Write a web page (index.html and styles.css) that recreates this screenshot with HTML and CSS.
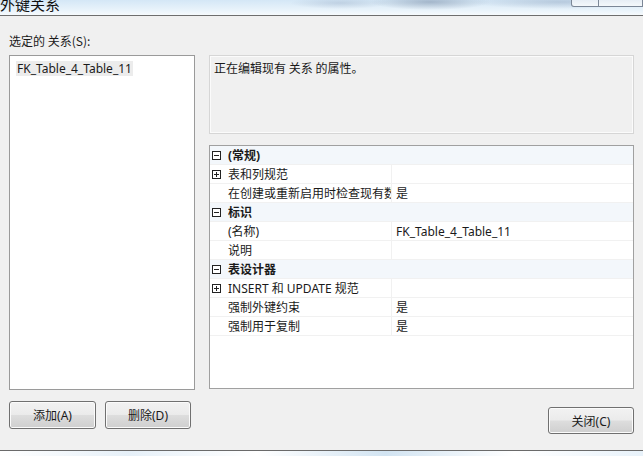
FILE: index.html
```html
<!DOCTYPE html>
<html lang="zh-CN">
  <head>
    <meta charset="UTF-8" />
    <title>外键关系</title>
    <link rel="stylesheet" href="styles.css">
  </head>
  <body>
    <div class="titlebar">
      <span class="title">外键关系</span>
      <div class="caption-buttons">
        <span class="cap cap-help"></span>
        <span class="cap cap-close"></span>
      </div>
    </div>

    <div class="dialog">
      <div class="label">选定的 关系(S):</div>

      <div class="main">
        <div class="listbox">
          <div class="item selected">FK_Table_4_Table_11</div>
        </div>

        <div class="right">
          <div class="desc">正在编辑现有 关系 的属性。</div>

          <div class="grid">
            <div class="row category">
              <span class="gutter"><svg width="9" height="9" viewBox="0 0 9 9"><rect x="0.5" y="0.5" width="8" height="8" fill="#fff" stroke="#222"/><path d="M2 4.5h5" stroke="#222"/></svg></span>
              <span class="name">(常规)</span>
            </div>
            <div class="row">
              <span class="gutter"><svg width="9" height="9" viewBox="0 0 9 9"><rect x="0.5" y="0.5" width="8" height="8" fill="#fff" stroke="#222"/><path d="M2 4.5h5M4.5 2v5" stroke="#222"/></svg></span>
              <span class="name">表和列规范</span>
              <span class="value"></span>
            </div>
            <div class="row">
              <span class="gutter"></span>
              <span class="name">在创建或重新启用时检查现有数据</span>
              <span class="value">是</span>
            </div>
            <div class="row category">
              <span class="gutter"><svg width="9" height="9" viewBox="0 0 9 9"><rect x="0.5" y="0.5" width="8" height="8" fill="#fff" stroke="#222"/><path d="M2 4.5h5" stroke="#222"/></svg></span>
              <span class="name">标识</span>
            </div>
            <div class="row">
              <span class="gutter"></span>
              <span class="name">(名称)</span>
              <span class="value">FK_Table_4_Table_11</span>
            </div>
            <div class="row">
              <span class="gutter"></span>
              <span class="name">说明</span>
              <span class="value"></span>
            </div>
            <div class="row category">
              <span class="gutter"><svg width="9" height="9" viewBox="0 0 9 9"><rect x="0.5" y="0.5" width="8" height="8" fill="#fff" stroke="#222"/><path d="M2 4.5h5" stroke="#222"/></svg></span>
              <span class="name">表设计器</span>
            </div>
            <div class="row">
              <span class="gutter"><svg width="9" height="9" viewBox="0 0 9 9"><rect x="0.5" y="0.5" width="8" height="8" fill="#fff" stroke="#222"/><path d="M2 4.5h5M4.5 2v5" stroke="#222"/></svg></span>
              <span class="name">INSERT 和 UPDATE 规范</span>
              <span class="value"></span>
            </div>
            <div class="row">
              <span class="gutter"></span>
              <span class="name">强制外键约束</span>
              <span class="value">是</span>
            </div>
            <div class="row">
              <span class="gutter"></span>
              <span class="name">强制用于复制</span>
              <span class="value">是</span>
            </div>
          </div>
        </div>
      </div>

      <div class="buttons">
        <button class="btn">添加(A)</button>
        <button class="btn">删除(D)</button>
        <span class="spacer"></span>
        <button class="btn btn-close">关闭(C)</button>
      </div>
    </div>

    <div class="desktop"></div>
  </body>
</html>
```

FILE: styles.css
```css
* {
  margin: 0;
  padding: 0;
  box-sizing: border-box;
}

body {
  width: 643px;
  height: 456px;
  overflow: hidden;
  background: #f0f0f0;
  font-family: "Noto Sans", "Noto Sans CJK SC", sans-serif;
  font-size: 12px;
  color: #1a1a1a;
}

/* window caption, mostly scrolled off the top */
.titlebar {
  height: 16px;
  display: flex;
  justify-content: space-between;
  border-bottom: 1px solid #6e6e6e;
  overflow: hidden;
  background:
    radial-gradient(ellipse 60px 8px at 430px 2px, rgba(120, 140, 165, 0.55), transparent),
    radial-gradient(ellipse 90px 7px at 560px 2px, rgba(150, 170, 195, 0.5), transparent),
    radial-gradient(ellipse 50px 6px at 340px 3px, rgba(150, 170, 195, 0.4), transparent),
    linear-gradient(to bottom, #d4e7f6, #eaf4fb 70%, #f6fafd);
}

.title {
  font-family: "Noto Sans CJK SC", sans-serif;
  font-size: 15px;
  line-height: 15px;
  margin-top: -4px;
  color: #111;
}

.caption-buttons {
  display: flex;
  height: 8px;
  margin-top: -1px;
}

.cap {
  display: block;
  height: 8px;
  border: 1px solid #7b8797;
  border-top: none;
  background: linear-gradient(to bottom, #e4ecf4, #f4f8fb);
}

.cap-help {
  width: 28px;
  border-radius: 0 0 0 3px;
}

.cap-close {
  width: 44px;
  border-left: none;
}

.dialog {
  height: 435px;
  padding: 0 9px;
  border-bottom: 1px solid #6a6a6a;
  display: flex;
  flex-direction: column;
}

.label {
  margin-top: 17px;
  line-height: 16px;
  font-family: "Noto Sans CJK SC", sans-serif;
}

.main {
  margin-top: 6px;
  height: 335px;
  display: flex;
  gap: 14px;
}

.listbox {
  width: 186px;
  height: 335px;
  border: 1px solid #9a9a9a;
  background: #ffffff;
  padding: 4px 0 0 6px;
}

.item {
  display: inline-block;
  line-height: 15px;
  padding: 0 1px;
}

.item.selected {
  background: #ececec;
}

.right {
  flex: 1;
  display: flex;
  flex-direction: column;
  gap: 11px;
}

.desc {
  height: 79px;
  border: 1px solid #d6d6d6;
  box-shadow: inset 0 0 0 1px #fbfbfb;
  background: #f0f0f0;
  padding: 4px 4px;
  line-height: 16px;
  font-family: "Noto Sans CJK SC", sans-serif;
}

.grid {
  height: 244px;
  border: 1px solid #a0a0a0;
  background: #ffffff;
}

.row {
  height: 19px;
  display: flex;
  line-height: 16px;
  border-bottom: 1px solid #f1f1f1;
}

.row.category {
  background: #f3f7fb;
  font-weight: bold;
}

.gutter {
  width: 17px;
  display: flex;
  align-items: center;
  padding-left: 2px;
}

.gutter svg {
  display: block;
}

.name {
  width: 164px;
  padding: 2px 0 0 1px;
  white-space: nowrap;
  overflow: hidden;
}

.value {
  flex: 1;
  border-left: 1px solid #f1f1f1;
  padding: 2px 0 0 4px;
  white-space: nowrap;
}

.buttons {
  margin-top: 11px;
  display: flex;
  align-items: flex-start;
  gap: 9px;
}

.spacer {
  flex: 1;
}

.btn {
  width: 87px;
  height: 28px;
  border: 1px solid #707070;
  border-radius: 3px;
  background: linear-gradient(to bottom, #f2f2f2 0%, #ebebeb 48%, #dddddd 52%, #cfcfcf 100%);
  box-shadow: inset 0 0 0 1px #fbfbfb;
  font-family: "Noto Sans", "Noto Sans CJK SC", sans-serif;
  font-size: 12px;
  color: #1a1a1a;
}

.btn + .btn {
  width: 86px;
}

.btn-close {
  width: 86px;
  height: 27px;
  margin-top: 6px;
}

.desktop {
  height: 5px;
  background: linear-gradient(to right, #ffffff, #e6f0f8 20%, #ffffff 40%, #d2e4f2 60%, #ffffff 80%, #e8f2fa);
}
```
